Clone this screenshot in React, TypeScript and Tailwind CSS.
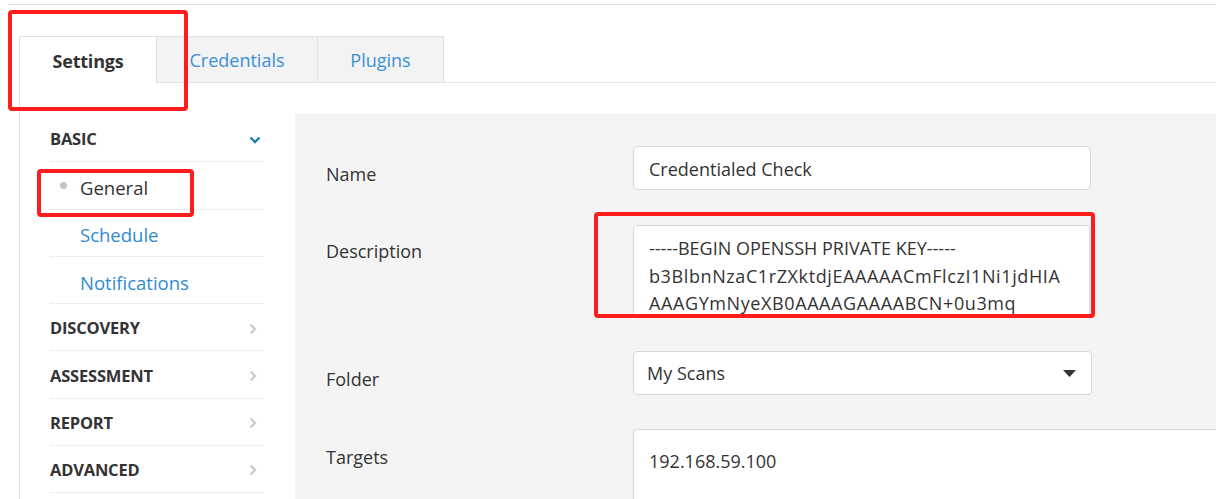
import React from "react";

const ChevronRight = () => (
  <svg width="8" height="12" viewBox="0 0 8 12" className="mr-[6px]">
    <polyline points="1.5,1.5 6,6 1.5,10.5" fill="none" stroke="#c8c8c8" strokeWidth="2" />
  </svg>
);

const ChevronDown = () => (
  <svg width="12" height="8" viewBox="0 0 12 8" className="mr-[2px]">
    <polyline points="1.5,1.5 6,6 10.5,1.5" fill="none" stroke="#1c7ea8" strokeWidth="2.4" />
  </svg>
);

const SectionRow = ({ label, open }: { label: string; open?: boolean }) => (
  <div className="h-[47.25px] pt-[3px] flex items-center justify-between border-b border-dotted border-[#dcdcdc]">
    <span className="text-[16.5px] font-bold text-[#333] tracking-[-0.2px]">{label}</span>
    {open ? <ChevronDown /> : <ChevronRight />}
  </div>
);

const SubRow = ({ label, active }: { label: string; active?: boolean }) => (
  <div className="h-[47.25px] pt-[5px] flex items-center border-b border-dotted border-[#dcdcdc] relative">
    {active && <span className="absolute left-[10px] top-[20px] w-[7px] h-[7px] rounded-full bg-[#c4c4c4]" />}
    <span className={`pl-[30px] text-[18.5px] ${active ? "text-[#333]" : "text-[#2e8bd3]"}`}>{label}</span>
  </div>
);

export default function App() {
  return (
    <div className="w-[1216px] h-[499px] bg-white relative overflow-hidden font-['Open_Sans',sans-serif]">
      <div className="pt-[4px] pl-[8px]">
        <div className="border-t border-[#e0e0e0]" />
      </div>
      {/* Tabs */}
      <div className="mt-[31px] flex pl-[19px] h-[47px]">
        <div className="w-[138px] h-[47px] pt-[2px] border-l border-t border-r border-[#e0e0e0] bg-white flex items-center justify-center">
          <span className="text-[18px] font-bold text-[#333] tracking-[-0.2px]">Settings</span>
        </div>
        <div className="w-[161px] h-[47px] pt-[2px] border-t border-r border-b border-[#e2e2e2] bg-[#f3f3f3] flex items-center justify-center">
          <span className="text-[18px] text-[#3a90d6]">Credentials</span>
        </div>
        <div className="w-[126px] h-[47px] pt-[2px] border-t border-r border-b border-[#e2e2e2] bg-[#f3f3f3] flex items-center justify-center">
          <span className="text-[18px] text-[#3a90d6]">Plugins</span>
        </div>
        <div className="flex-1 border-b border-[#e2e2e2]" />
      </div>
      {/* Body */}
      <div className="ml-[19px] border-l border-[#e0e0e0] pt-[31px] flex h-[416px]">
        <div className="w-[275px] pt-[1px] pl-[30px] pr-[32px] shrink-0">
          <SectionRow label="BASIC" open />
          <SubRow label="General" active />
          <SubRow label="Schedule" />
          <SubRow label="Notifications" />
          <SectionRow label="DISCOVERY" />
          <SectionRow label="ASSESSMENT" />
          <SectionRow label="REPORT" />
          <SectionRow label="ADVANCED" />
        </div>
        <div className="flex-1 bg-[#f4f4f4] pl-[31px] pt-[32px] text-[#333] text-[18px]">
          <div className="flex">
            <label className="w-[307px] pt-[17px] leading-[22px]">Name</label>
            <div className="w-[458px] h-[44px] pt-[3px] bg-white border border-[#d8d8d8] rounded-[4px] pl-[15px] flex items-center">
              Credentialed Check
            </div>
          </div>
          <div className="flex mt-[35px]">
            <label className="w-[307px] pt-[15px] leading-[22px]">Description</label>
            <div className="w-[457px] h-[92px] bg-white border border-[#d8d8d8] rounded-[4px] pl-[15px] pt-[9px] leading-[27.5px] overflow-hidden whitespace-pre">
              {"-----BEGIN OPENSSH PRIVATE KEY-----\n"}
              <span className="tracking-[0.6px]">{"b3BlbnNzaC1rZXktdjEAAAAACmFlczI1Ni1jdHIA\nAAAGYmNyeXB0AAAAGAAAABCN+0u3mq\nAAAAEAAAAAEAAAGXAAAAB3NzaC1yc2E"}</span>
            </div>
          </div>
          <div className="flex mt-[34px]">
            <label className="w-[307px] pt-[17px] leading-[22px]">Folder</label>
            <div className="w-[459px] h-[44px] bg-white border border-[#d8d8d8] rounded-[4px] pl-[13px] pr-[15px] flex items-center justify-between">
              <span>My Scans</span>
              <svg width="13" height="7" viewBox="0 0 13 7">
                <polygon points="0,0 13,0 6.5,7" fill="#333" />
              </svg>
            </div>
          </div>
          <div className="flex mt-[34px]">
            <label className="w-[307px] pt-[17px] leading-[22px]">Targets</label>
            <div className="flex-1 h-[120px] bg-white border border-[#d8d8d8] rounded-l-[4px] border-r-0 pl-[15px] pt-[18px] leading-[27px]">
              192.168.59.100
            </div>
          </div>
        </div>
      </div>
      {/* Annotation boxes */}
      <div className="absolute left-[8px] top-[10px] w-[180px] h-[101px] border-[4px] border-[#ff1c1c] rounded-[4px]" />
      <div className="absolute left-[37px] top-[169px] w-[157px] h-[48px] border-[4px] border-[#ff1c1c] rounded-[4px]" />
      <div className="absolute left-[594px] top-[212px] w-[501px] h-[106px] border-[4px] border-[#ff1c1c] rounded-[4px]" />
    </div>
  );
}
